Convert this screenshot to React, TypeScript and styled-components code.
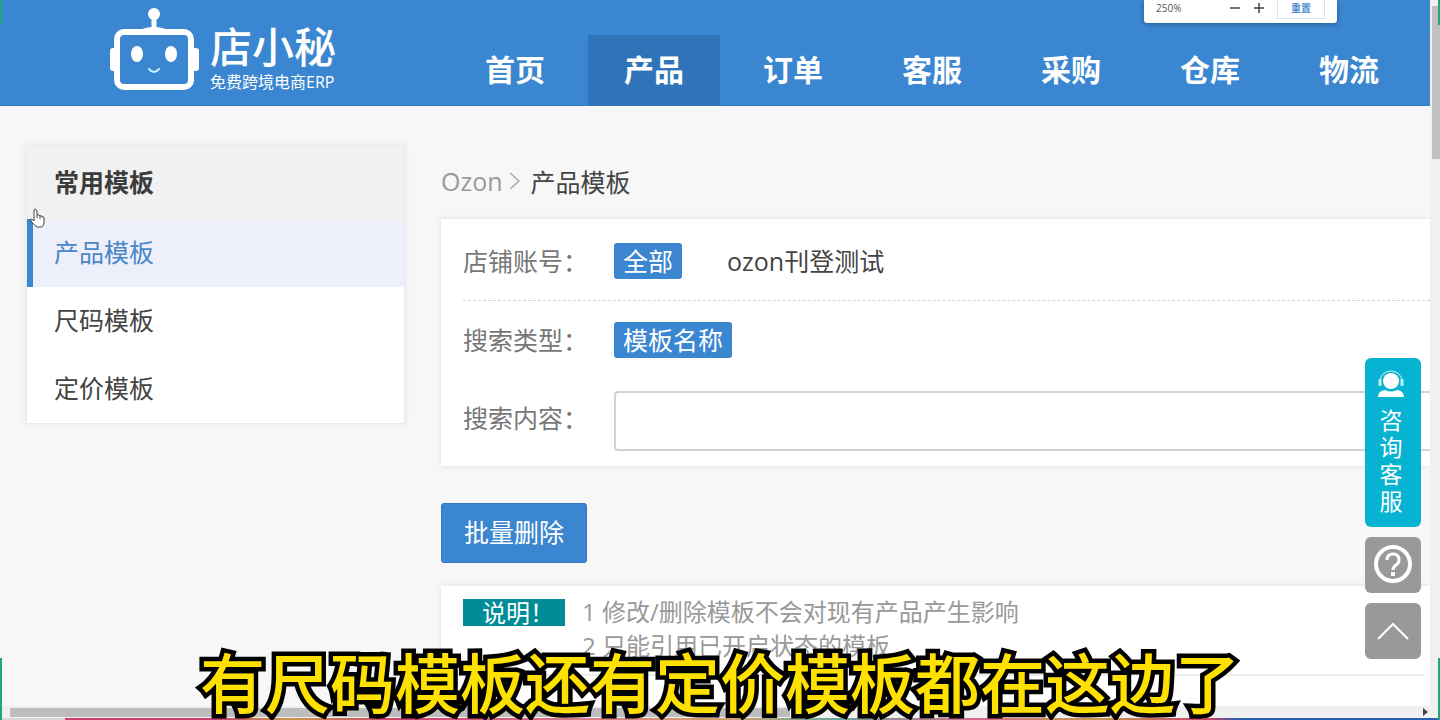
import React from "react";
import styled, { createGlobalStyle } from "styled-components";

const blue = "#3b86d0";
const sans = `"Open Sans", "Noto Sans CJK SC", sans-serif`;

const GlobalStyle = createGlobalStyle`
  *, *::before, *::after { box-sizing: border-box; }
  body {
    margin: 0;
    overflow: hidden;
    font-family: ${sans};
    font-size: 25px;
    color: #444;
    background: #f7f7f7;
  }
  button, input { font: inherit; }
  ul, ol, p, h2 { margin: 0; padding: 0; list-style: none; }
  a { color: inherit; text-decoration: none; }
`;

const Screen = styled.div`
  position: relative;
  display: grid;
  grid-template-columns: minmax(0, 1fr) 10px;
  grid-template-rows: minmax(0, 1fr) 12px 2px;
  height: 100vh;
  overflow: hidden;
`;

const Page = styled.div`
  overflow: hidden;
  background: #f7f7f7;
`;

const Header = styled.header`
  display: flex;
  align-items: flex-end;
  height: 106px;
  padding-left: 108px;
  background: ${blue};
  border-bottom: 1px solid #3478bd;
`;

const Brand = styled.a`
  display: flex;
  flex: none;
  width: 341px;
  align-self: stretch;
  align-items: flex-start;
  gap: 11px;
  padding-top: 8px;
  color: #fff;
`;

const BrandText = styled.span`
  display: flex;
  flex-direction: column;
  padding-top: 15px;
`;

const BrandTag = styled.span`
  font-size: 16px;
  line-height: 20px;
  padding-top: 2px;
  white-space: nowrap;
`;

const BrandName = styled.span`
  font-size: 42px;
  font-weight: 500;
  line-height: 47px;
  white-space: nowrap;
`;

const Nav = styled.nav`
  display: flex;
  gap: 7px;
`;

const NavLink = styled.a<{ $active?: boolean }>`
  flex: none;
  width: 132px;
  height: 70px;
  line-height: 70px;
  text-align: center;
  font-size: 30px;
  font-weight: 700;
  color: #fff;
  background: ${(p) => (p.$active ? "#2f74b8" : "transparent")};
`;

const Body = styled.div`
  display: flex;
  align-items: flex-start;
  gap: 36px;
  padding: 38px 0 0 26px;
`;

const SideMenu = styled.aside`
  flex: none;
  width: 379px;
  background: #fff;
  border: 1px solid #ebebeb;
  box-shadow: 0 0 6px rgba(0, 0, 0, 0.08);
`;

const SideTitle = styled.h2`
  height: 74px;
  padding-left: 27px;
  line-height: 75px;
  font-size: 25px;
  font-weight: 700;
  color: #3c3c3c;
  background: #f1f1f1;
`;

const SideLink = styled.a<{ $active?: boolean }>`
  display: block;
  height: 68px;
  padding-left: ${(p) => (p.$active ? "21px" : "27px")};
  line-height: 66px;
  color: ${(p) => (p.$active ? "#4a86c8" : "#444")};
  background: ${(p) => (p.$active ? "#edf0fa" : "#fff")};
  border-left: ${(p) => (p.$active ? `6px solid ${blue}` : "0")};
`;

const Main = styled.main`
  flex: 1;
  min-width: 0;
`;

const Crumbs = styled.nav`
  display: flex;
  align-items: center;
  gap: 6px;
  height: 75px;
  padding-bottom: 2px;
  color: #999;
`;

const Current = styled.span`
  padding-left: 4px;
  color: #444;
`;

const Panel = styled.section`
  background: #fff;
  box-shadow: 0 0 6px rgba(0, 0, 0, 0.1);
`;

const Filters = styled(Panel)`
  padding: 0 0 15px 22px;
`;

const FilterRow = styled.div<{ $dashed?: boolean; $tall?: boolean }>`
  display: flex;
  align-items: center;
  height: ${(p) => (p.$dashed ? "82px" : p.$tall ? "76px" : "74px")};
  padding-top: ${(p) => (p.$dashed || !p.$tall ? "3px" : "16px")};
  border-bottom: ${(p) => (p.$dashed ? "1px dashed #d4d4d4" : "0")};
`;

const FilterLabel = styled.label<{ $raised?: boolean }>`
  flex: none;
  width: 151px;
  padding-bottom: ${(p) => (p.$raised ? "8px" : "2px")};
  color: #777;
`;

const Tag = styled.button<{ $active?: boolean }>`
  height: 36px;
  margin: 0 36px 0 0;
  padding: 0 9px;
  border: 0;
  border-radius: 3px;
  line-height: 34px;
  color: ${(p) => (p.$active ? "#fff" : "#444")};
  background: ${(p) => (p.$active ? blue : "transparent")};
`;

const SearchInput = styled.input`
  flex: 1;
  min-width: 0;
  height: 60px;
  padding: 0 16px;
  border: 2px solid #d3d3d3;
  border-right: 0;
  border-radius: 4px 0 0 4px;
  background: #fff;
`;

const DeleteButton = styled.button`
  display: block;
  height: 60px;
  margin: 37px 0 23px;
  padding: 0 22px 4px;
  border: 1px solid #3379bf;
  border-radius: 3px;
  color: #fff;
  background: ${blue};
`;

const Notice = styled(Panel)`
  display: flex;
  align-items: flex-start;
  gap: 17px;
  height: 180px;
  padding: 9px 10px 0 22px;
  font-size: 24px;
  line-height: 34px;
  color: #999;
`;

const NoticeTag = styled.span`
  flex: none;
  width: 102px;
  margin-top: 4px;
  line-height: 27px;
  padding-left: 8px;
  text-align: center;
  color: #fff;
  background: #008c96;
`;

const Divider = styled.hr`
  height: 2px;
  margin: -92px 6px 0 0;
  border: 0;
  background: #ececec;
`;

const VerticalBar = styled.div`
  display: flex;
  justify-content: flex-end;
  padding-top: 6px;
  background: #f0f0f0;
`;

const VerticalThumb = styled.span`
  width: 8px;
  height: 153px;
  background: #c1c1c1;
`;

const HorizontalBar = styled.div`
  display: flex;
  grid-column: 1 / -1;
  align-items: center;
  justify-content: space-between;
  padding: 0 12px 0 10px;
  background: #f0f0f0;
`;

const HorizontalThumb = styled.span`
  width: 55%;
  height: 9px;
  background: #bdbdbd;
`;

const DesktopStrip = styled.div`
  grid-column: 1 / -1;
  background: linear-gradient(
    90deg,
    #d8d8d8 65px,
    #c9416d 65px,
    #c9416d 15%,
    #c99a4a 20%,
    #c9416d 28%,
    #d77a8a 40%,
    #d7a06a 50%,
    #6aa79a 58%,
    #d76a8a 68%,
    #c99a4a 76%,
    #c9416d 84%,
    #285fae 86%
  );
`;

const Edge = styled.i<{ $side: "left" | "right"; $top?: boolean }>`
  position: absolute;
  ${(p) => p.$side}: 0;
  ${(p) => (p.$top ? "top" : "bottom")}: 0;
  width: 2px;
  height: ${(p) => (p.$top ? "25px" : "62px")};
  background: #1fa67f;
`;

const ZoomPopup = styled.div`
  position: absolute;
  top: 0;
  right: 103px;
  display: flex;
  align-items: center;
  width: 193px;
  height: 23px;
  padding: 0 12px 8px;
  border-radius: 0 0 3px 3px;
  font-size: 10px;
  color: #555;
  background: #fff;
  box-shadow: 0 1px 5px rgba(0, 0, 0, 0.35);
`;

const ZoomStep = styled.button`
  display: flex;
  padding: 0;
  margin-right: 12px;
  border: 0;
  color: #444;
  background: none;
`;

const ZoomLevel = styled.span`
  flex: 1;
`;

const ResetButton = styled.button`
  width: 48px;
  height: 22px;
  padding: 0;
  border: 1px solid #e2e2ee;
  font-size: 10px;
  font-weight: 700;
  line-height: 14px;
  color: #4a8ccc;
  background: #fff;
`;

const Dock = styled.div`
  position: absolute;
  top: 358px;
  right: 19px;
  display: flex;
  flex-direction: column;
  gap: 10px;
  width: 56px;
`;

const ChatButton = styled.button`
  display: flex;
  flex-direction: column;
  align-items: center;
  height: 169px;
  padding: 12px 4px 0 0;
  border: 0;
  border-radius: 6px;
  font-size: 23px;
  line-height: 27px;
  color: #fff;
  background: #06b3d1;
`;

const ChatLabel = styled.span`
  width: 23px;
  padding-top: 9px;
`;

const DockButton = styled.button`
  display: flex;
  align-items: center;
  justify-content: center;
  height: 56px;
  padding: 0;
  border: 0;
  border-radius: 6px;
  color: #fff;
  background: #999;
`;

const Caption = styled.p`
  position: absolute;
  right: 0;
  bottom: 0;
  left: 0;
  padding-bottom: 4px;
  text-align: center;
  font-family: "Noto Sans CJK SC", sans-serif;
  font-size: 65px;
  font-weight: 500;
  line-height: 72px;
  white-space: nowrap;
  color: #ffe100;
  -webkit-text-stroke: 9px #000;
  stroke-linejoin: round;
  paint-order: stroke fill;
  pointer-events: none;
`;

const Pointer = styled.svg`
  position: absolute;
  top: 208px;
  left: 29px;
`;

const RobotLogo = () => (
  <svg width="91" height="84" viewBox="0 0 91 84" fill="none" aria-hidden="true">
    <circle cx="46" cy="6" r="6" fill="#fff" />
    <path d="M46 8v16" stroke="#fff" strokeWidth="5" />
    <path d="M30 23q7-4 16-4t16 4z" fill="#fff" />
    <rect x="9" y="24" width="74" height="55" rx="7" stroke="#fff" strokeWidth="6" />
    <rect x="2" y="40" width="7" height="23" rx="3" fill="#fff" />
    <rect x="84" y="40" width="7" height="23" rx="3" fill="#fff" />
    <ellipse cx="29" cy="46" rx="6" ry="8" fill="#fff" />
    <ellipse cx="63" cy="46" rx="6" ry="8" fill="#fff" />
    <path d="M41 61q5 6 10 0" stroke="#c9f4ff" strokeWidth="2" strokeLinecap="round" />
  </svg>
);

const AgentIcon = () => (
  <svg width="28" height="28" viewBox="0 0 28 28" fill="none" aria-hidden="true">
    <circle cx="14" cy="11" r="8" fill="#fff" />
    <path d="M3 14v-3a11 10 0 0 1 22 0v3" stroke="#d5f3fa" strokeWidth="1" />
    <path d="M3 9v7M25 9v7" stroke="#bdebf5" strokeWidth="3" />
    <path d="M1 27q0-6 7-7 6 3 12 0 7 1 7 7z" fill="#fff" />
  </svg>
);

const navItems = ["首页", "产品", "订单", "客服", "采购", "仓库", "物流"];
const sideItems = ["产品模板", "尺码模板", "定价模板"];

export default function App() {
  return (
    <>
      <GlobalStyle />
      <Screen>
        <Page>
          <Header>
            <Brand href="#">
              <RobotLogo />
              <BrandText>
                <BrandName>店小秘</BrandName>
                <BrandTag>免费跨境电商ERP</BrandTag>
              </BrandText>
            </Brand>
            <Nav>
              {navItems.map((item) => (
                <NavLink key={item} href="#" $active={item === "产品"}>
                  {item}
                </NavLink>
              ))}
            </Nav>
          </Header>
          <Body>
            <SideMenu>
              <SideTitle>常用模板</SideTitle>
              <ul>
                {sideItems.map((item, i) => (
                  <li key={item}>
                    <SideLink href="#" $active={i === 0}>
                      {item}
                    </SideLink>
                  </li>
                ))}
              </ul>
            </SideMenu>
            <Main>
              <Crumbs>
                <a href="#">Ozon</a>
                <svg width="12" height="20" viewBox="0 0 12 20" fill="none" aria-hidden="true">
                  <path d="M1 2l9 8-9 8" stroke="#aaa" strokeWidth="1.5" />
                </svg>
                <Current>产品模板</Current>
              </Crumbs>
              <Filters>
                <FilterRow $dashed>
                  <FilterLabel as="span">店铺账号：</FilterLabel>
                  <Tag type="button" $active>全部</Tag>
                  <Tag type="button">ozon刊登测试</Tag>
                </FilterRow>
                <FilterRow>
                  <FilterLabel as="span">搜索类型：</FilterLabel>
                  <Tag type="button" $active>模板名称</Tag>
                </FilterRow>
                <FilterRow $tall>
                  <FilterLabel htmlFor="search" $raised>搜索内容：</FilterLabel>
                  <SearchInput id="search" type="text" />
                </FilterRow>
              </Filters>
              <DeleteButton type="button">批量删除</DeleteButton>
              <Notice>
                <NoticeTag>说明！</NoticeTag>
                <ol>
                  <li>1 修改/删除模板不会对现有产品产生影响</li>
                  <li>2 只能引用已开启状态的模板</li>
                </ol>
              </Notice>
              <Divider />
            </Main>
          </Body>
        </Page>
        <VerticalBar>
          <VerticalThumb />
        </VerticalBar>
        <HorizontalBar>
          <HorizontalThumb />
          <svg width="5" height="8" viewBox="0 0 5 8" aria-hidden="true">
            <path d="M0 0l5 4-5 4z" fill="#444" />
          </svg>
        </HorizontalBar>
        <DesktopStrip />
        <Edge $side="left" $top />
        <Edge $side="right" $top />
        <Edge $side="left" />
        <Edge $side="right" />
        <ZoomPopup>
          <ZoomLevel>250%</ZoomLevel>
          <ZoomStep type="button" aria-label="缩小">
            <svg width="12" height="12" viewBox="0 0 12 12" aria-hidden="true">
              <path d="M1 6h10" stroke="currentColor" strokeWidth="1.5" />
            </svg>
          </ZoomStep>
          <ZoomStep type="button" aria-label="放大">
            <svg width="12" height="12" viewBox="0 0 12 12" aria-hidden="true">
              <path d="M1 6h10M6 1v10" stroke="currentColor" strokeWidth="1.5" />
            </svg>
          </ZoomStep>
          <ResetButton type="button">重置</ResetButton>
        </ZoomPopup>
        <Dock>
          <ChatButton type="button">
            <AgentIcon />
            <ChatLabel>咨询客服</ChatLabel>
          </ChatButton>
          <DockButton type="button" aria-label="帮助">
            <svg width="40" height="40" viewBox="0 0 40 40" fill="none" stroke="currentColor" aria-hidden="true">
              <circle cx="20" cy="19" r="17" strokeWidth="4" />
              <path d="M14 15q0-6 6-6t6 6q0 3-3 5t-3 5" strokeWidth="3" />
              <path d="M20 27v4" strokeWidth="4" />
            </svg>
          </DockButton>
          <DockButton type="button" aria-label="返回顶部">
            <svg width="32" height="18" viewBox="0 0 32 18" fill="none" aria-hidden="true">
              <path d="M1 17L16 2l15 15" stroke="currentColor" strokeWidth="2" />
            </svg>
          </DockButton>
        </Dock>
        <Pointer width="16" height="20" viewBox="0 0 16 20" aria-hidden="true">
          <path
            d="M5 12V3q0-2 1-2t2 2v4q2-1 3 1 2-1 2 1 2-1 2 1v4q0 5-4 5H8q-3-2-6-6-1-2 0-2t3 2z"
            fill="#fff"
            stroke="#444"
          />
          <path d="M8 7v3M11 8v3" stroke="#444" />
        </Pointer>
        <Caption>有尺码模板还有定价模板都在这边了</Caption>
      </Screen>
    </>
  );
}
